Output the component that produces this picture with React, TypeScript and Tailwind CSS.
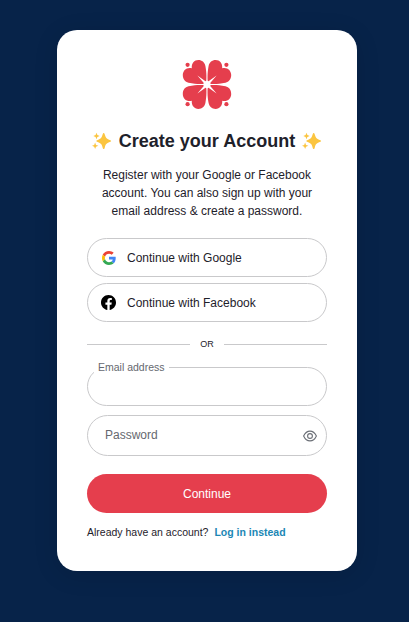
import type { ReactNode } from 'react'

type ProviderButtonProps = {
    label: string
    icon: ReactNode
}

const quarters = ['scale(1 1)', 'scale(-1 1)', 'scale(1 -1)', 'scale(-1 -1)']

const CloverLogo = () => (
  <svg className="mx-auto block" width="50" height="50" viewBox="-25 -25.5 50 50">
    {quarters.map((transform) => (
      <g key={transform} transform={transform}>
        <path fill="#e53e4d" d="M-.8-.8C-.5-6-.2-11-1.6-18.5C-2.4-22.2-5-24.4-8.6-24.4C-12.8-24.4-15.6-21-15.2-16.3C-20.5-17.6-24.2-14-24.2-9.4C-24.2-5.4-22-2.6-18.5-1.8C-11-.2-6-.5-.8-.8Z" />
        <circle fill="#e53e4d" cx="-19.4" cy="-19.7" r="2.1" />
        <path fill="#fff" d="M0-4L-1.5-3.2L-9.6-9L-3.2-1.5L-4 0L0 0Z" />
      </g>
    ))}
  </svg>
)

const Sparkles = () => (
  <svg className="shrink-0" width="20" height="18" viewBox="0 0 20 18">
    <path fill="#fbc540" d="M11.7 1C12.2 1 12.5 1.6 12.8 2.6C13.7 5.8 14.4 6.8 17.7 8C18.7 8.4 19.1 8.6 19.1 9C19.1 9.4 18.7 9.6 17.7 10C14.4 11.2 13.7 12.2 12.8 15.4C12.5 16.4 12.2 17 11.7 17C11.2 17 10.9 16.4 10.6 15.4C9.7 12.2 9 11.2 5.7 10C4.7 9.6 4.3 9.4 4.3 9C4.3 8.6 4.7 8.4 5.7 8C9 6.8 9.7 5.8 10.6 2.6C10.9 1.6 11.2 1 11.7 1Z" />
    <path fill="#fbc540" d="M4.5.7L5.4 3.1L7.7 4L5.4 4.9L4.5 7.2L3.6 4.9L1.3 4L3.6 3.1ZM3.1 10.4L4 12.9L6.4 13.8L4 14.7L3.1 17.1L2.2 14.7L-.1 13.8L2.2 12.9Z" />
  </svg>
)

const GoogleIcon = () => (
  <svg width="14" height="14" viewBox="0 0 48 48">
    <path fill="#EA4335" d="M24 9.5c3.54 0 6.71 1.22 9.21 3.6l6.85-6.85C35.9 2.38 30.47 0 24 0 14.62 0 6.51 5.38 2.56 13.22l7.98 6.19C12.43 13.72 17.74 9.5 24 9.5z" />
    <path fill="#4285F4" d="M46.98 24.55c0-1.57-.15-3.09-.38-4.55H24v9.02h12.94c-.58 2.96-2.26 5.48-4.78 7.18l7.73 6c4.51-4.18 7.09-10.36 7.09-17.65z" />
    <path fill="#FBBC05" d="M10.53 28.59c-.48-1.45-.76-2.99-.76-4.59s.27-3.14.76-4.59l-7.98-6.19C.92 16.46 0 20.12 0 24c0 3.88.92 7.54 2.56 10.78l7.97-6.19z" />
    <path fill="#34A853" d="M24 48c6.48 0 11.93-2.13 15.89-5.81l-7.73-6c-2.15 1.45-4.92 2.3-8.16 2.3-6.26 0-11.57-4.22-13.47-9.91l-7.98 6.19C6.51 42.62 14.62 48 24 48z" />
  </svg>
)

const FacebookIcon = () => (
  <svg width="15" height="15" viewBox="0 0 24 24">
    <path d="M24 12.07C24 5.41 18.63 0 12 0S0 5.41 0 12.07C0 18.1 4.39 23.1 10.13 24v-8.44H7.08v-3.49h3.05V9.41c0-3.02 1.79-4.69 4.53-4.69 1.31 0 2.68.24 2.68.24v2.97h-1.51c-1.49 0-1.95.93-1.95 1.89v2.25h3.32l-.53 3.49h-2.79V24C19.61 23.1 24 18.1 24 12.07z" />
  </svg>
)

const EyeIcon = () => (
  <svg width="14" height="12" viewBox="0 0 14 12" fill="none" stroke="#6b6f76" strokeWidth="1.1">
    <path d="M.6 6C2 3 4.3 1.1 7 1.1S12 3 13.4 6C12 9 9.7 10.9 7 10.9S2 9 .6 6Z" />
    <circle cx="7" cy="6" r="2.4" />
  </svg>
)

const ProviderButton = ({label, icon}: ProviderButtonProps) => {
  return (
    <button className="flex h-[39px] w-full items-center rounded-full border border-[#c9c9cb] pl-3 text-[12px]">
      <span className="flex w-4 justify-end">{icon}</span>
      <span className="ml-[11px]">{label}</span>
    </button>
  )
}

const App = () => {

  return (

    <div className="min-h-screen bg-[#072349] pt-[30px] pl-[57px] font-['Liberation_Sans',Arial,sans-serif] text-[#1e212a]">
      <div className="h-[541px] w-[300px] rounded-[20px] bg-white px-[30px] pt-[29px] shadow-[0_4px_24px_rgba(0,0,0,0.12)]">
        <CloverLogo />
        <div className="mt-[20px] flex h-6 items-center justify-center gap-[7px]">
          <Sparkles />
          <h1 className="text-[18px] font-bold whitespace-nowrap">Create your Account</h1>
          <Sparkles />
        </div>
        <p className="mt-[13px] text-center text-[12px] leading-[18px] whitespace-nowrap">
          Register with your Google or Facebook<br />
          account. You can also sign up with your<br />
          email address &amp; create a password.
        </p>
        <div className="mt-[18px] flex flex-col gap-[6px]">
          <ProviderButton label="Continue with Google" icon={<GoogleIcon />} />
          <ProviderButton label="Continue with Facebook" icon={<FacebookIcon />} />
        </div>
        <div className="mt-[14px] flex h-4 items-center text-[9px]">
          <span className="h-px flex-1 bg-[#c9c9cb]" />
          <span className="w-[34px] pt-px text-center">OR</span>
          <span className="h-px flex-1 bg-[#c9c9cb]" />
        </div>
        <div className="relative mt-[15px] h-[39px] rounded-full border border-[#c9c9cb]">
          <label className="absolute top-[-9px] left-[6px] bg-white px-1 text-[10.5px] leading-4 text-[#65686f]">Email address</label>
        </div>
        <div className="mt-[9px] flex h-[41px] items-center justify-between rounded-full border border-[#c9c9cb] pr-[9px] pl-[17px] text-[12px] text-[#65686f]">
          <span className="pb-[2px]">Password</span>
          <EyeIcon />
        </div>
        <button className="mt-[18px] h-[39px] w-full rounded-full bg-[#e53e4d] text-[12px] text-white">Continue</button>
        <div className="mt-[11px] flex gap-[6px] text-[10.5px] leading-4 whitespace-nowrap">
          <span>Already have an account?</span>
          <a className="font-bold text-[#1b87b5]">Log in instead</a>
        </div>
      </div>
    </div>
  )
}

export default App
